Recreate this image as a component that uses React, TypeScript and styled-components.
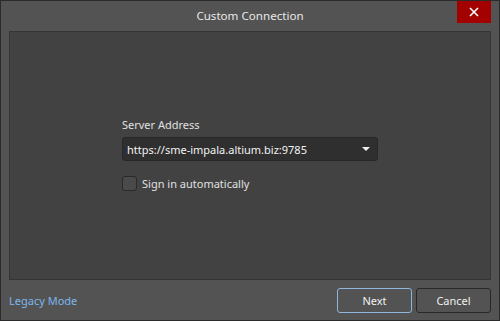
import styled, { createGlobalStyle } from "styled-components";

const GlobalStyle = createGlobalStyle`
  html, body {
    margin: 0;
    padding: 0;
    background: #535353;
  }
  * {
    box-sizing: border-box;
  }
`;

const Window = styled.div`
  width: 500px;
  height: 321px;
  display: flex;
  flex-direction: column;
  background: #535353;
  border: 1px solid #2b2b2b;
  font-family: "Noto Sans", "Open Sans", sans-serif;
  font-size: 11px;
  color: #e6e6e6;
`;

const TitleBar = styled.div`
  height: 30px;
  flex-shrink: 0;
  position: relative;
  display: flex;
  align-items: center;
  justify-content: center;
  font-size: 11.6px;
  color: #e8e8e8;
  padding-bottom: 2px;
`;

const CloseButton = styled.div`
  position: absolute;
  top: 0;
  right: 8px;
  width: 34px;
  height: 22px;
  background: #a30000;
  display: flex;
  align-items: center;
  justify-content: center;
`;

const Panel = styled.div`
  height: 249px;
  flex-shrink: 0;
  margin: 0 8px;
  background: #424242;
  border: 1px solid #353535;
  display: flex;
  justify-content: center;
  padding-top: 85px;
`;

const Form = styled.div`
  width: 256px;
  display: flex;
  flex-direction: column;
`;

const Label = styled.div`
  color: #e0e0e0;
  line-height: 16px;
  margin-bottom: 4px;
`;

const Select = styled.div`
  height: 24px;
  background: #2f2f2f;
  border: 1px solid #272727;
  border-radius: 3px;
  display: flex;
  align-items: center;
  justify-content: space-between;
  padding: 0 7px 0 4px;
  color: #f2f2f2;
`;

const Caret = styled.div`
  width: 0;
  height: 0;
  border-left: 4px solid transparent;
  border-right: 4px solid transparent;
  border-top: 4px solid #f0f0f0;
`;

const CheckRow = styled.label`
  display: flex;
  align-items: center;
  gap: 5px;
  margin-top: 15px;
  color: #e0e0e0;
`;

const Box = styled.span`
  width: 15px;
  height: 15px;
  background: #4a4a4a;
  border: 1px solid #2a2a2a;
  border-radius: 3px;
`;

const Footer = styled.div`
  flex: 1;
  display: flex;
  align-items: center;
  padding: 0 8px;
`;

const LinkText = styled.a`
  color: #7db6ec;
  flex: 1;
  text-decoration: none;
  padding-top: 1px;
`;

const Button = styled.button<{ primary?: boolean }>`
  width: 75px;
  height: 25px;
  margin-left: 4px;
  background: #535353;
  border: 1px solid ${(p) => (p.primary ? "#8fb6dc" : "#282828")};
  border-radius: 3px;
  color: #f0f0f0;
  font-family: inherit;
  font-size: 11px;
  padding: 0;
`;

export default function App() {
  return (
    <>
      <GlobalStyle />
      <Window>
        <TitleBar>
          Custom Connection
          <CloseButton>
            <svg width="10" height="10" viewBox="0 0 10 10">
              <path d="M1 1L9 9M9 1L1 9" stroke="#fff" strokeWidth="1.6" />
            </svg>
          </CloseButton>
        </TitleBar>
        <Panel>
          <Form>
            <Label>Server Address</Label>
            <Select>
              https://sme-impala.altium.biz:9785
              <Caret />
            </Select>
            <CheckRow>
              <Box />
              Sign in automatically
            </CheckRow>
          </Form>
        </Panel>
        <Footer>
          <LinkText>Legacy Mode</LinkText>
          <Button primary>Next</Button>
          <Button>Cancel</Button>
        </Footer>
      </Window>
    </>
  );
}
